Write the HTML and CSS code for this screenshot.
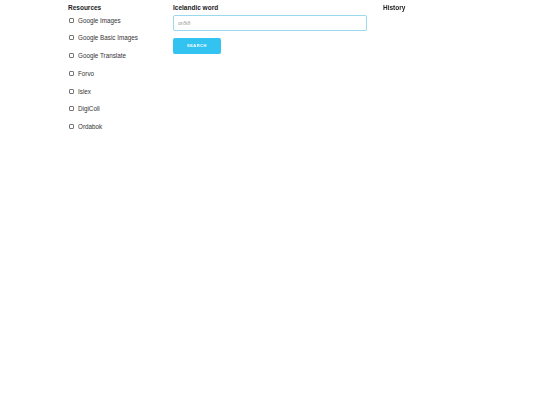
FILE: index.html
```html
<!DOCTYPE html>
<html lang="en">
<head>
  <meta charset="UTF-8">
  <title>Icelandic word lookup</title>
  <link rel="stylesheet" href="styles.css">
</head>
<body>
  <div class="container">

    <!-- Resources column -->
    <div class="col resources">
      <h5>Resources</h5>
      <label class="resource"><input type="checkbox"> <span>Google Images</span></label>
      <label class="resource"><input type="checkbox"> <span>Google Basic Images</span></label>
      <label class="resource"><input type="checkbox"> <span>Google Translate</span></label>
      <label class="resource"><input type="checkbox"> <span>Forvo</span></label>
      <label class="resource"><input type="checkbox"> <span>Islex</span></label>
      <label class="resource"><input type="checkbox"> <span>DigiColl</span></label>
      <label class="resource"><input type="checkbox"> <span>Ordabok</span></label>
    </div>

    <!-- Search column -->
    <div class="col search">
      <h5>Icelandic word</h5>
      <input type="text" class="word-input" placeholder="orðið" autofocus>
      <button class="search-btn">Search</button>
    </div>

    <!-- History column -->
    <div class="col history">
      <h5>History</h5>
    </div>

  </div>
</body>
</html>
```

FILE: styles.css
```css
* {
  box-sizing: border-box;
}

body {
  margin: 0;
  padding: 0;
  font-family: "Liberation Sans", Arial, sans-serif;
  color: #222;
  background: #fff;
}

.container {
  display: flex;
  padding: 4px 0 0 68px;
}

.col h5 {
  margin: 0 0 3.5px 0;
  font-size: 6.5px;
  font-weight: bold;
  line-height: 8px;
}

.resources {
  width: 105px;
}

.resource {
  display: flex;
  align-items: center;
  height: 9px;
  margin-bottom: 8.8px;
  font-size: 6.3px;
  color: #333;
  cursor: pointer;
}

.resource input {
  appearance: none;
  -webkit-appearance: none;
  width: 5px;
  height: 5px;
  margin: 0 4px 0 1px;
  border: 0.5px solid #777;
  border-radius: 1px;
  background: #fff;
}

.resource input:checked {
  background: #33c3f0;
  border-color: #33c3f0;
}

.search {
  width: 210px;
  display: flex;
  flex-direction: column;
  align-items: flex-start;
}

.search h5 {
  margin-bottom: 2.5px;
}

.word-input {
  width: 194px;
  height: 16.5px;
  padding: 0 4px;
  border: 1px solid #9ad8ee;
  border-radius: 2px;
  font-family: inherit;
  font-size: 5.5px;
  color: #222;
  outline: none;
}

.word-input::placeholder {
  color: #999;
}

.search-btn {
  margin-top: 6.5px;
  width: 48px;
  height: 16px;
  border: none;
  border-radius: 2px;
  background: #33c3f0;
  color: #fff;
  font-family: inherit;
  font-size: 4.2px;
  font-weight: bold;
  letter-spacing: 0.4px;
  text-transform: uppercase;
  cursor: pointer;
}
```
